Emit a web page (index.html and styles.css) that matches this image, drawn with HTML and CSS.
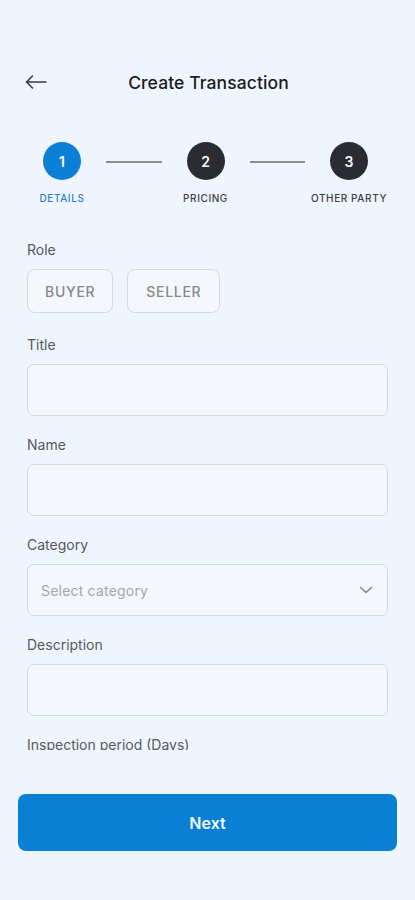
FILE: index.html
```html
<!DOCTYPE html>
<html lang="en">
<head>
<meta charset="utf-8">
<title>Create Transaction</title>
<link rel="stylesheet" href="styles.css">
</head>
<body>
<div class="screen">
  <header class="topbar">
    <button class="back" aria-label="Back">
      <svg width="22" height="14" viewBox="0 0 22 14" fill="none" stroke="#3a3d42" stroke-width="1.6" stroke-linecap="round" stroke-linejoin="round"><path d="M21 7H1.5M7.5 1L1.5 7l6 6"/></svg>
    </button>
    <h1 class="title">Create Transaction</h1>
  </header>

  <div class="stepper">
    <div class="step active">
      <div class="dot">1</div>
      <div class="step-label">DETAILS</div>
    </div>
    <div class="line"></div>
    <div class="step">
      <div class="dot">2</div>
      <div class="step-label">PRICING</div>
    </div>
    <div class="line"></div>
    <div class="step">
      <div class="dot">3</div>
      <div class="step-label">OTHER PARTY</div>
    </div>
  </div>

  <div class="form-scroll">
    <div class="group role-group">
      <div class="label">Role</div>
      <div class="roles">
        <button class="role">BUYER</button>
        <button class="role">SELLER</button>
      </div>
    </div>
    <div class="group">
      <div class="label">Title</div>
      <div class="field"></div>
    </div>
    <div class="group">
      <div class="label">Name</div>
      <div class="field"></div>
    </div>
    <div class="group">
      <div class="label">Category</div>
      <div class="field select">
        <span class="placeholder">Select category</span>
        <svg width="14" height="8" viewBox="0 0 14 8" fill="none" stroke="#7a7e83" stroke-width="1.4" stroke-linecap="round" stroke-linejoin="round"><path d="M1.5 1.5L7 6.5l5.5-5"/></svg>
      </div>
    </div>
    <div class="group">
      <div class="label">Description</div>
      <div class="field"></div>
    </div>
    <div class="group">
      <div class="label">Inspection period (Days)</div>
      <div class="field"></div>
    </div>
  </div>

  <div class="footer">
    <button class="next">Next</button>
  </div>
</div>
</body>
</html>
```

FILE: styles.css
```css
* { box-sizing: border-box; }
html, body {
  margin: 0;
  padding: 0;
  background: #eef5fd;
}
body {
  font-family: Inter, "Noto Sans", "Liberation Sans", sans-serif;
  color: #1b1c1e;
}
.screen {
  width: 415px;
  height: 900px;
  display: flex;
  flex-direction: column;
}
.topbar {
  position: relative;
  height: 36px;
  margin-top: 64px;
  display: flex;
  align-items: center;
  justify-content: center;
}
.back {
  position: absolute;
  left: 25px;
  top: 11px;
  border: 0;
  background: none;
  padding: 0;
  width: 22px;
  height: 14px;
  display: flex;
}
.title {
  margin: 0;
  font-size: 17.5px;
  font-weight: 500;
  letter-spacing: 0.1px;
  color: #1b1c1e;
  padding-left: 2px;
}
.stepper {
  display: flex;
  align-items: flex-start;
  padding: 42px 26px 0 22px;
}
.step {
  width: 80px;
  display: flex;
  flex-direction: column;
  align-items: center;
}
.dot {
  width: 38px;
  height: 38px;
  border-radius: 50%;
  background: #2a2c31;
  color: #fff;
  font-size: 14px;
  font-weight: 600;
  display: flex;
  align-items: center;
  justify-content: center;
}
.step.active .dot {
  background: #0b7fd3;
}
.step-label {
  margin-top: 12px;
  font-size: 10px;
  font-weight: 500;
  letter-spacing: 0.6px;
  color: #3d4045;
  white-space: nowrap;
}
.step.active .step-label {
  color: #2f7fcf;
}
.line {
  flex: 1;
  height: 2px;
  margin: 19px 4px 0;
  background: #8a8d92;
}
.form-scroll {
  height: 510px;
  margin-top: 36px;
  margin-bottom: 2px;
  overflow: hidden;
  padding: 0 27px 0 27px;
}
.group {
  margin-bottom: 19px;
}
.role-group {
  margin-bottom: 22px;
}
.label {
  height: 20px;
  line-height: 20px;
  font-size: 14px;
  color: #55595e;
  margin-bottom: 9px;
}
.roles {
  display: flex;
  gap: 14px;
}
.role {
  height: 44px;
  padding: 0 17px;
  border: 1px solid #d4d9df;
  border-radius: 8px;
  background: #f4f8fd;
  font-family: inherit;
  font-size: 14px;
  font-weight: 500;
  letter-spacing: 0.7px;
  color: #84888d;
}
.role + .role {
  padding: 0 18px;
}
.field {
  height: 52px;
  border: 1px solid #d3d8de;
  border-radius: 7px;
  background: #f4f8fe;
}
.select {
  display: flex;
  align-items: center;
  justify-content: space-between;
  padding: 0 14px 0 13px;
}
.placeholder {
  font-size: 14px;
  color: #a3a7ac;
  letter-spacing: 0.2px;
}
.footer {
  padding: 42px 18px 0;
}
.next {
  width: 100%;
  height: 57px;
  border: 0;
  border-radius: 8px;
  background: #0b7fd3;
  color: #f3f8fe;
  font-family: inherit;
  font-size: 16px;
  font-weight: 600;
}
```
